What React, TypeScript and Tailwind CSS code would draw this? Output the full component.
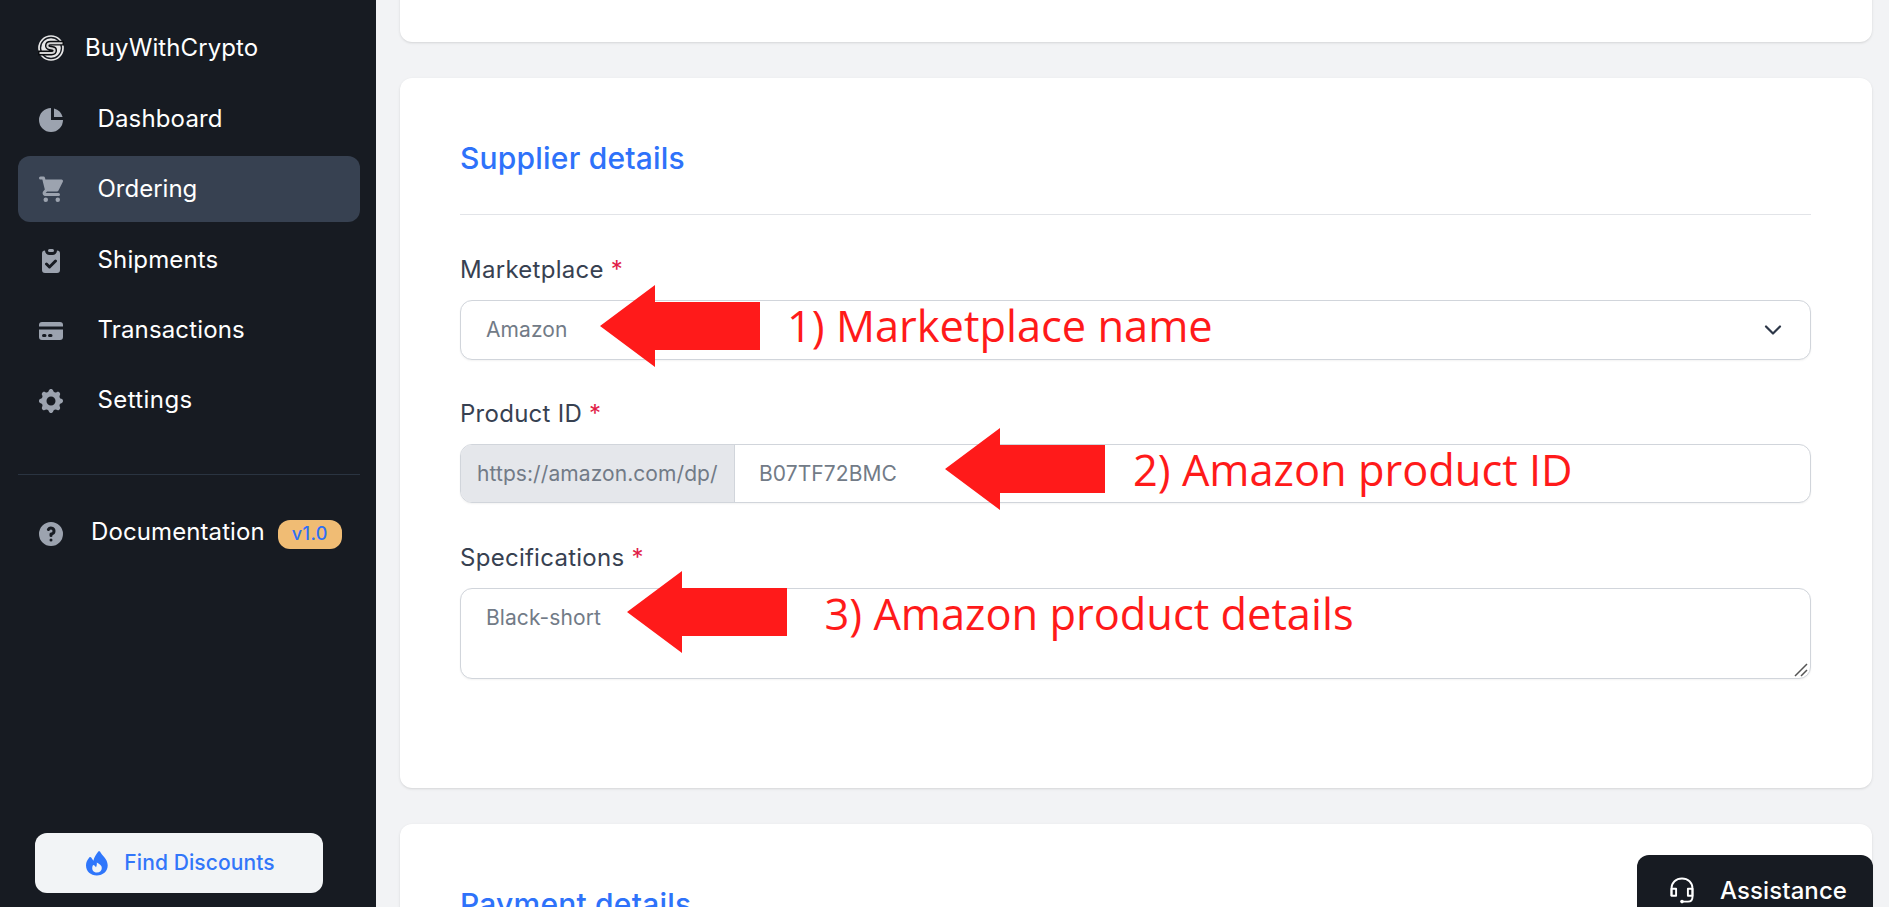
import React from "react";
import { HiChartPie, HiShoppingCart, HiClipboardCheck, HiCreditCard, HiCog, HiQuestionMarkCircle } from "react-icons/hi";

const nav = [
  { label: "Dashboard", Icon: HiChartPie, tracking: "tracking-[0.15px]" },
  { label: "Ordering", Icon: HiShoppingCart, active: true, tracking: "tracking-normal" },
  { label: "Shipments", Icon: HiClipboardCheck, tracking: "tracking-[0.15px]" },
  { label: "Transactions", Icon: HiCreditCard, tracking: "tracking-[0.15px]" },
  { label: "Settings", Icon: HiCog, tracking: "tracking-[0.4px]" },
];

function Logo() {
  return (
    <svg viewBox="0 0 26 26" className="h-[26px] w-[26px]" fill="none">
      <circle cx="13" cy="13" r="12" stroke="#e8e8e8" strokeWidth="1.7" />
      <circle cx="13" cy="13" r="9.8" fill="#e8e8e8" />
      <path d="M26 8.200H12.500C8.500 8.200 8.500 12.600 11.500 13l3 .4c3 .4 3 4.600-1 4.600H0" stroke="#0b0d10" strokeWidth="4.800" />
      <path d="M24.500 8.200H12.500C8.500 8.200 8.500 12.600 11.500 13l3 .4c3 .4 3 4.600-1 4.600H1.500" stroke="#d4d4d4" strokeWidth="2" />
    </svg>
  );
}

function Flame() {
  return (
    <svg viewBox="0 0 22 25" className="mr-[16px] h-[25px] w-[22px]">
      <path
        fillRule="evenodd"
        fill="#2f76fb"
        d="M12.300.6c.5-.6 1.200-.6 1.700 0 1.400 3.400 7.700 7.400 7.700 13.600 0 6-4.800 10.300-10.900 10.300S0 20.200 0 14.200C0 11 1.500 8.600 3.300 6.500c.6-.7 1.400-.6 1.900.1l2.200 3.100C8.100 6.500 10 3.500 12.300.6ZM10.800 11.500c.2 2-.1 3.400-.8 4.700L8.500 14.600c-.9-1-1.500-.8-1.900.3-1.300 3.800.9 6.600 4.300 6.600 3 0 4.900-2 4.900-4.600 0-2.400-2-3.800-5-5.400Z"
      />
    </svg>
  );
}

function Headset() {
  return (
    <svg viewBox="0 0 24 27" className="h-[27px] w-[24px]" fill="none" stroke="#fff" strokeWidth="1.900" strokeLinejoin="round">
      <path d="M1.500 19V11.500C1.500 5.500 6 1.500 12 1.500s10.500 4 10.500 10V20c0 3-1.600 4.600-4.500 4.600h-5" />
      <path d="M1.500 11.700h4.600v7H1.500zM22.500 11.700h-4.600v7h4.600z" />
      <circle cx="12" cy="24.600" r="1.800" fill="#fff" stroke="none" />
    </svg>
  );
}

function Sidebar() {
  return (
    <aside className="flex h-full w-[375.500px] shrink-0 flex-col bg-[#171b22] pr-[15.500px] pl-[18px] text-2xl text-white">
      <div className="mt-[14px] flex h-[68px] items-center pl-5">
        <Logo />
        <span className="ml-[21px] tracking-[0.1px]">BuyWithCrypto</span>
      </div>
      <nav className="mt-[4px] flex flex-col gap-[4.300px]">
        {nav.map(({ label, Icon, active, tracking }) => (
          <a key={label} className={`flex h-[66px] items-center rounded-xl pl-[18px] ${active ? "bg-[#374151]" : ""}`}>
            <Icon className="relative top-[1px] h-[30px] w-[30px] text-[#9ca3af]" />
            <span className={`ml-[31.500px] ${tracking}`}>{label}</span>
          </a>
        ))}
      </nav>
      <hr className="mt-[40.500px] border-t border-[#2a3441]" />
      <a className="mt-[26.500px] flex h-[66px] items-center pl-[18px]">
        <HiQuestionMarkCircle className="h-[30px] w-[30px] text-[#9ca3af]" />
        <span className="mb-[4px] ml-[25px] tracking-[0.1px]">Documentation</span>
        <span className="ml-[13px] flex h-[29px] w-[64px] items-center justify-center rounded-[12px] bg-[#f0bc74] text-lg font-medium tracking-[0.4px] text-[#2e6ff6]">v1.0</span>
      </a>
      <button className="mt-auto mb-[14px] ml-[17px] flex h-[60px] w-[288px] items-center justify-center rounded-xl bg-[#f2f4f6] pl-[3px] text-[21px] font-medium tracking-[0.1px] text-[#3276fa]">
        <Flame />
        Find Discounts
      </button>
    </aside>
  );
}

function Arrow({ className }: { className: string }) {
  return (
    <svg viewBox="0 0 160 82" className={`absolute h-[82px] w-[160px] ${className}`}>
      <path d="M0 41 55 0V17H160V65H55V82Z" fill="#ff1a1a" />
    </svg>
  );
}

function Note({ className, children }: { className: string; children: React.ReactNode }) {
  return <span className={`absolute whitespace-nowrap font-['Open_Sans',sans-serif] text-[43.400px] leading-[60px] tracking-normal text-[#ff1a1a] ${className}`}>{children}</span>;
}

function Label({ children }: { children: React.ReactNode }) {
  return (
    <div className="mb-[14px] h-8 text-2xl leading-8 tracking-[0.270px] text-[#374151]">
      {children} <span className="text-[#e11d48]">*</span>
    </div>
  );
}

const field = "rounded-xl border border-[#d1d5db] bg-white text-[21px] tracking-[0.080px] text-[#727b87] shadow-xs";
const card = "rounded-xl bg-white shadow";
const title = "text-[30px] leading-10 font-medium tracking-[0.200px] text-[#2e72fa]";

export default function App() {
  return (
    <div className="flex h-[907px] w-[1889px] overflow-hidden bg-[#f2f3f5] font-['Inter',sans-serif]">
      <Sidebar />
      <main className="relative flex flex-1 flex-col gap-[36px] pr-[17px] pl-[24.500px]">
        <section className={`${card} -mt-5 h-[62px] shrink-0`} />
        <section className={`${card} h-[710px] shrink-0 pt-[60px] pr-[61px] pl-[60px]`}>
          <h2 className={`h-10 ${title}`}>Supplier details</h2>
          <hr className="mt-[36px] mb-[39px] border-t border-[#e2e4e8]" />
          <Label>Marketplace</Label>
          <div className={`${field} relative flex h-[60px] items-center pr-[28px] pl-[25px]`}>
            Amazon
            <svg viewBox="0 0 18 10" className="ml-auto h-[10px] w-[18px]" fill="none" stroke="#2d3748" strokeWidth="2.200" strokeLinecap="round" strokeLinejoin="round">
              <path d="m2 1.500 7 7 7-7" />
            </svg>
            <Arrow className="top-[-16px] left-[139px]" />
            <Note className="top-[-5px] left-[326px]">1) Marketplace name</Note>
          </div>
          <div className="mt-[38px]"><Label>Product ID</Label></div>
          <div className={`${field} relative flex h-[59px]`}>
            <span className="flex w-[274px] items-center rounded-l-[11px] border-r border-[#d1d5db] bg-[#e5e7eb] pl-[16px]">https://amazon.com/dp/</span>
            <span className="flex items-center pl-[24px]">B07TF72BMC</span>
            <Arrow className="top-[-17px] left-[484px]" />
            <Note className="top-[-5px] left-[672px]">2) Amazon product ID</Note>
          </div>
          <div className="mt-[39px]"><Label>Specifications</Label></div>
          <div className={`${field} relative h-[91px] px-[25px] pt-[13px]`}>
            Black-short
            <Arrow className="top-[-18px] left-[165.500px]" />
            <Note className="top-[-5px] left-[363.500px]">3) Amazon product details</Note>
            <svg viewBox="0 0 14 14" className="absolute right-[2px] bottom-[1px] h-[14px] w-[14px]" stroke="#555" strokeWidth="1.500">
              <path d="M1 13 13 1M7 13l6-6" />
            </svg>
          </div>
        </section>
        <section className={`${card} h-[200px] shrink-0 px-[60px] pt-[60px]`}>
          <h2 className={title}>Payment details</h2>
        </section>
        <button className="absolute top-[854.500px] right-[16px] flex h-[72px] w-[236px] items-center rounded-t-xl bg-[#171b22] pl-[33px] text-2xl font-medium text-white">
          <Headset />
          <span className="ml-[26px] tracking-[0.1px]">Assistance</span>
        </button>
      </main>
    </div>
  );
}
